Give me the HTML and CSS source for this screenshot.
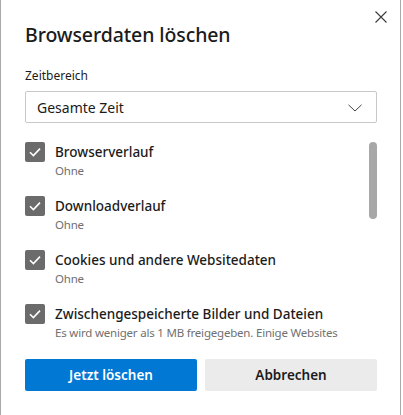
FILE: index.html
```html
<!DOCTYPE html>
<html lang="de">
<head>
<meta charset="utf-8">
<link rel="stylesheet" href="styles.css">
</head>
<body>
<div class="dialog">
  <button class="close" aria-label="Schließen">
    <svg width="12" height="12" viewBox="0 0 12 12"><path d="M0.5 0.5 L11.5 11.5 M11.5 0.5 L0.5 11.5" stroke="#3b3b3b" stroke-width="1.1" fill="none"/></svg>
  </button>
  <h1 class="title">Browserdaten löschen</h1>
  <div class="field-label">Zeitbereich</div>
  <div class="select">
    <span>Gesamte Zeit</span>
    <svg width="14" height="8" viewBox="0 0 14 8"><path d="M0.5 0.8 L7 7 L13.5 0.8" stroke="#444" stroke-width="1" fill="none"/></svg>
  </div>
  <div class="scroll">
    <div class="list">
      <div class="item">
        <span class="check"><svg width="20" height="20" viewBox="0 0 20 20"><path d="M5 10.3 L8.4 13.6 L15 6.6" stroke="#fff" stroke-width="1.6" fill="none"/></svg></span>
        <div class="text"><div class="label">Browserverlauf</div><div class="sub">Ohne</div></div>
      </div>
      <div class="item">
        <span class="check"><svg width="20" height="20" viewBox="0 0 20 20"><path d="M5 10.3 L8.4 13.6 L15 6.6" stroke="#fff" stroke-width="1.6" fill="none"/></svg></span>
        <div class="text"><div class="label">Downloadverlauf</div><div class="sub">Ohne</div></div>
      </div>
      <div class="item">
        <span class="check"><svg width="20" height="20" viewBox="0 0 20 20"><path d="M5 10.3 L8.4 13.6 L15 6.6" stroke="#fff" stroke-width="1.6" fill="none"/></svg></span>
        <div class="text"><div class="label">Cookies und andere Websitedaten</div><div class="sub">Ohne</div></div>
      </div>
      <div class="item">
        <span class="check"><svg width="20" height="20" viewBox="0 0 20 20"><path d="M5 10.3 L8.4 13.6 L15 6.6" stroke="#fff" stroke-width="1.6" fill="none"/></svg></span>
        <div class="text"><div class="label">Zwischengespeicherte Bilder und Dateien</div><div class="sub">Es wird weniger als 1 MB freigegeben. Einige Websites</div></div>
      </div>
    </div>
    <div class="track"><div class="thumb"></div></div>
  </div>
  <div class="buttons">
    <button class="btn primary">Jetzt löschen</button>
    <button class="btn secondary">Abbrechen</button>
  </div>
</div>
</body>
</html>
```

FILE: styles.css
```css
html, body {
  margin: 0;
  padding: 0;
  background: #ffffff;
}
body {
  font-family: "Noto Sans", "Open Sans", sans-serif;
  color: #1b1b1b;
}
.dialog {
  position: relative;
  box-sizing: border-box;
  width: 401px;
  height: 415px;
  border-left: 1px solid #a9a9a9;
  border-right: 1px solid #a9a9a9;
  padding: 22px 23px 0 24px;
  background: #fff;
}
.close {
  position: absolute;
  top: 11px;
  right: 13px;
  width: 12px;
  height: 12px;
  padding: 0;
  border: 0;
  background: none;
  display: block;
}
.close svg { display: block; }
.title {
  margin: 0;
  font-size: 19.5px;
  font-weight: 500;
  line-height: 26px;
  color: #1b1b1b;
  letter-spacing: -0.1px;
}
.field-label {
  margin-top: 20px;
  font-size: 12px;
  line-height: 16px;
  color: #1b1b1b;
}
.select {
  margin-top: 7px;
  height: 32px;
  box-sizing: border-box;
  border: 1px solid #c8c8c8;
  border-radius: 2px;
  display: flex;
  align-items: center;
  justify-content: space-between;
  padding: 0 14px 0 11px;
  font-size: 14px;
}
.select svg { display: block; margin-top: 1px; }
.scroll {
  margin-top: 19px;
  height: 199px;
  display: flex;
  overflow: hidden;
}
.list {
  flex: 1;
  display: flex;
  flex-direction: column;
  gap: 17px;
}
.item {
  display: flex;
  gap: 10px;
  align-items: flex-start;
}
.check {
  width: 20px;
  height: 20px;
  flex: none;
  background: #6b6b6b;
  border-radius: 2px;
}
.check svg { display: block; }
.text { min-width: 0; }
.label {
  font-size: 13.5px;
  font-weight: 500;
  line-height: 20px;
  color: #1b1b1b;
}
.sub {
  margin-top: 1px;
  font-size: 11.5px;
  letter-spacing: -0.2px;
  line-height: 16px;
  color: #707070;
  white-space: nowrap;
}
.track {
  width: 8px;
  flex: none;
  margin-left: 4px;
}
.thumb {
  width: 8px;
  height: 77px;
  border-radius: 4px;
  background: #a7a7a7;
}
.buttons {
  margin-top: 18px;
  display: flex;
  gap: 8px;
}
.btn {
  flex: 1;
  height: 32px;
  border: 0;
  border-radius: 2px;
  font-family: inherit;
  font-size: 13.5px;
  font-weight: 600;
}
.primary {
  background: #0078d4;
  color: #fff;
}
.secondary {
  background: #ebebeb;
  color: #1b1b1b;
}
```
